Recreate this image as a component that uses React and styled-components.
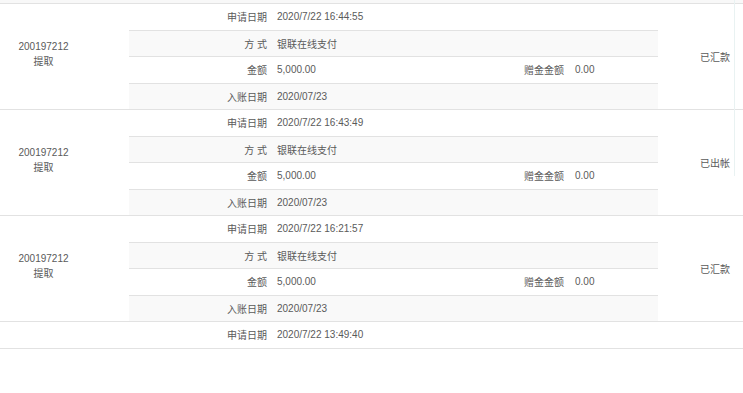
import React from "react";
import styled, { createGlobalStyle } from "styled-components";

const Global = createGlobalStyle`
  html, body { margin: 0; padding: 0; background: #fff; overflow: hidden; }
  body { font-family: "Liberation Sans", "Noto Sans CJK SC", sans-serif; font-size: 10px; color: #5a5a5a; }
`;

const Page = styled.div`
  position: relative;
  width: 743px;
  height: 393px;
  overflow: hidden;
`;

const TopBand = styled.div`
  height: 3px;
  background: #f8f8f8;
  border-bottom: 1px solid #e2e2e2;
  width: 772px;
`;

const Record = styled.div`
  display: grid;
  grid-template-columns: 87px 42px 529px 114px;
  width: 772px;
  height: ${(p) => p.$h}px;
  border-bottom: 1px solid #e2e2e2;
`;

const IdCell = styled.div`
  display: flex;
  flex-direction: column;
  align-items: center;
  justify-content: center;
  line-height: 15px;
  padding-bottom: 5px;
  box-sizing: border-box;
`;

const Spacer = styled.div``;

const Detail = styled.div`
  display: flex;
  flex-direction: column;
`;

const SubRow = styled.div`
  flex: 1;
  display: grid;
  grid-template-columns: 143px 198px 99px 89px;
  align-items: center;
  background: ${(p) => (p.$shade ? "#f9f9f9" : "#fff")};
  border-bottom: 1px solid #e2e2e2;
  &:last-child { border-bottom: none; }
`;

const Label = styled.span`
  text-align: right;
  padding-right: 5px;
  white-space: nowrap;
`;

const Value = styled.span`
  padding-left: ${(p) => p.$pl || 5}px;
  white-space: nowrap;
`;

const StatusCell = styled.div`
  display: flex;
  align-items: center;
  justify-content: center;
`;

const EdgeLine = styled.div`
  position: absolute;
  left: 734px;
  top: 0;
  width: 1px;
  height: 176px;
  background: #e9f2f2;
`;

const records = [
  { date: "2020/7/22 16:44:55", status: "已汇款" },
  { date: "2020/7/22 16:43:49", status: "已出帐" },
  { date: "2020/7/22 16:21:57", status: "已汇款" },
];

function FullRecord({ r }) {
  return (
    <Record $h={105}>
      <IdCell>
        <span>200197212</span>
        <span>提取</span>
      </IdCell>
      <Spacer />
      <Detail>
        <SubRow>
          <Label>申请日期</Label>
          <Value>{r.date}</Value>
        </SubRow>
        <SubRow $shade>
          <Label>方 式</Label>
          <Value>银联在线支付</Value>
        </SubRow>
        <SubRow>
          <Label>金额</Label>
          <Value>5,000.00</Value>
          <Label>赠金金额</Label>
          <Value $pl={6}>0.00</Value>
        </SubRow>
        <SubRow $shade>
          <Label>入账日期</Label>
          <Value>2020/07/23</Value>
        </SubRow>
      </Detail>
      <StatusCell>{r.status}</StatusCell>
    </Record>
  );
}

export default function App() {
  return (
    <>
      <Global />
      <Page>
        <TopBand />
        {records.map((r, i) => (
          <FullRecord key={i} r={r} />
        ))}
        <Record $h={25.5}>
          <IdCell />
          <Spacer />
          <Detail>
            <SubRow>
              <Label>申请日期</Label>
              <Value>2020/7/22 13:49:40</Value>
            </SubRow>
          </Detail>
          <StatusCell />
        </Record>
        <EdgeLine />
      </Page>
    </>
  );
}
